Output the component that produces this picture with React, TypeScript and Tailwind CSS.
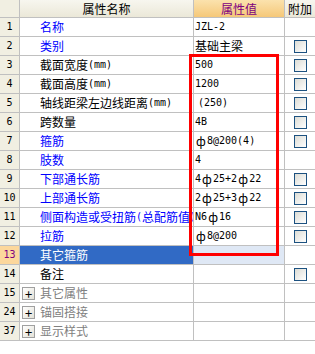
const rows: { n: number; name: string; value: string; color: string; check: boolean; indent?: boolean }[] = [
  { n: 1, name: '名称', value: 'JZL-2', color: 'text-[#0000ff]', check: false },
  { n: 2, name: '类别', value: '基础主梁', color: 'text-[#0000ff]', check: true },
  { n: 3, name: '截面宽度(mm)', value: '500', color: 'text-black', check: true },
  { n: 4, name: '截面高度(mm)', value: '1200', color: 'text-black', check: true },
  { n: 5, name: '轴线距梁左边线距离(mm)', value: '(250)', color: 'text-black', check: true, indent: true },
  { n: 6, name: '跨数量', value: '4B', color: 'text-black', check: true },
  { n: 7, name: '箍筋', value: 'ф8@200(4)', color: 'text-[#0000ff]', check: true },
  { n: 8, name: '肢数', value: '4', color: 'text-[#0000ff]', check: false },
  { n: 9, name: '下部通长筋', value: '4ф25+2ф22', color: 'text-[#0000ff]', check: true },
  { n: 10, name: '上部通长筋', value: '2ф25+3ф22', color: 'text-[#0000ff]', check: true },
  { n: 11, name: '侧面构造或受扭筋(总配筋值)', value: 'N6ф16', color: 'text-[#0000ff]', check: true },
  { n: 12, name: '拉筋', value: 'ф8@200', color: 'text-[#0000ff]', check: true },
];

const groups = [
  { n: 15, name: '其它属性' },
  { n: 24, name: '锚固搭接' },
  { n: 37, name: '显示样式' },
];

const line = 'border-[#c0c0c0]';

// ASCII in a narrow mono face (6px per char), CJK at 12px, rebar sign full width
const Txt = ({ text }: { text: string }) => (
  <>
    {text.split(/([\x20-\x7e]+|ф)/).map((part, i) => {
      if (!part) return null;
      if (part === 'ф')
        return (
          <span key={i} className="inline-block w-[12px] text-center">
            ф
          </span>
        );
      if (/^[\x20-\x7e]+$/.test(part))
        return (
          <span key={i} className="font-['DejaVu_Sans_Mono',monospace] text-[10px] whitespace-pre">
            {part}
          </span>
        );
      return <span key={i}>{part}</span>;
    })}
  </>
);

const CheckBox = () => (
  <div className="w-[13px] h-[13px] border border-[#1c5180] bg-gradient-to-br from-[#dcdcd5] to-white" />
);

const NumCell = ({ n, active }: { n: number; active?: boolean }) => (
  <div
    className={`h-[19px] flex items-center justify-center border-r border-b ${line} font-['DejaVu_Sans_Mono',monospace] text-[10px] ${
      active ? 'bg-[#fcd79c] text-[#800080]' : 'bg-[#f1efe2] text-black'
    }`}
  >
    {n}
  </div>
);

export default function App() {
  return (
    <div
      className="relative w-[315px] h-[354px] bg-white overflow-hidden text-[12px] leading-none"
      style={{ fontFamily: '"Noto Sans CJK SC", "Noto Sans", sans-serif' }}
    >
      <div className="grid grid-cols-[20px_174px_91px_30px]">
        {/* header */}
        <div className={`h-[18px] border-r border-b ${line} bg-[#f1efe2]`} />
        <div className={`h-[18px] flex items-center justify-center border-r border-b ${line} bg-gradient-to-b from-[#f7f6ef] to-[#ebe8d8]`}>
          属性名称
        </div>
        <div className={`h-[18px] flex items-center justify-center border-r border-b ${line} bg-gradient-to-b from-[#fbe2ad] to-[#f5c878] text-[#800080]`}>
          属性值
        </div>
        <div className={`h-[18px] flex items-center justify-center border-b ${line} bg-gradient-to-b from-[#f7f6ef] to-[#ebe8d8]`}>
          附加
        </div>

        {rows.map((r) => (
          <div key={r.n} className="contents">
            <NumCell n={r.n} />
            <div className={`h-[19px] flex items-center pl-[20px] border-r border-b ${line} ${r.color} whitespace-nowrap overflow-hidden`}>
              <Txt text={r.name} />
            </div>
            <div
              className={`h-[19px] flex items-center ${r.indent ? 'pl-[4px]' : 'pl-[1px]'} border-r border-b ${line} whitespace-nowrap overflow-hidden`}
            >
              <Txt text={r.value} />
            </div>
            <div className={`h-[19px] flex items-center justify-center border-b ${line}`}>
              {r.check && <CheckBox />}
            </div>
          </div>
        ))}

        {/* selected row */}
        <NumCell n={13} active />
        <div className={`h-[19px] flex items-center pl-[20px] border-r border-b ${line} bg-[#316ac5] text-white`}>
          其它箍筋
        </div>
        <div className={`h-[19px] border-r border-b ${line} bg-[#dfe8f5]`} />
        <div className={`h-[19px] border-b ${line}`} />

        <NumCell n={14} />
        <div className={`h-[19px] flex items-center pl-[20px] border-r border-b ${line} text-black`}>备注</div>
        <div className={`h-[19px] border-r border-b ${line}`} />
        <div className={`h-[19px] flex items-center justify-center border-b ${line}`}>
          <CheckBox />
        </div>

        {groups.map((g) => (
          <div key={g.n} className="contents">
            <NumCell n={g.n} />
            <div className={`h-[19px] flex items-center pl-[2px] border-r border-b ${line} text-[#808080]`}>
              <div className="w-[13px] h-[13px] border border-[#a0a0a0] bg-gradient-to-br from-white to-[#e4e2d8] flex items-center justify-center text-black text-[13px] leading-none mr-[5px]">
                +
              </div>
              {g.name}
            </div>
            <div className={`h-[19px] border-r border-b ${line}`} />
            <div className={`h-[19px] border-b ${line}`} />
          </div>
        ))}
      </div>

      {/* red highlight frame */}
      <div className="absolute left-[189px] top-[54px] w-[90px] h-[202px] border-[3px] border-[#ff0000] pointer-events-none" />
    </div>
  );
}
